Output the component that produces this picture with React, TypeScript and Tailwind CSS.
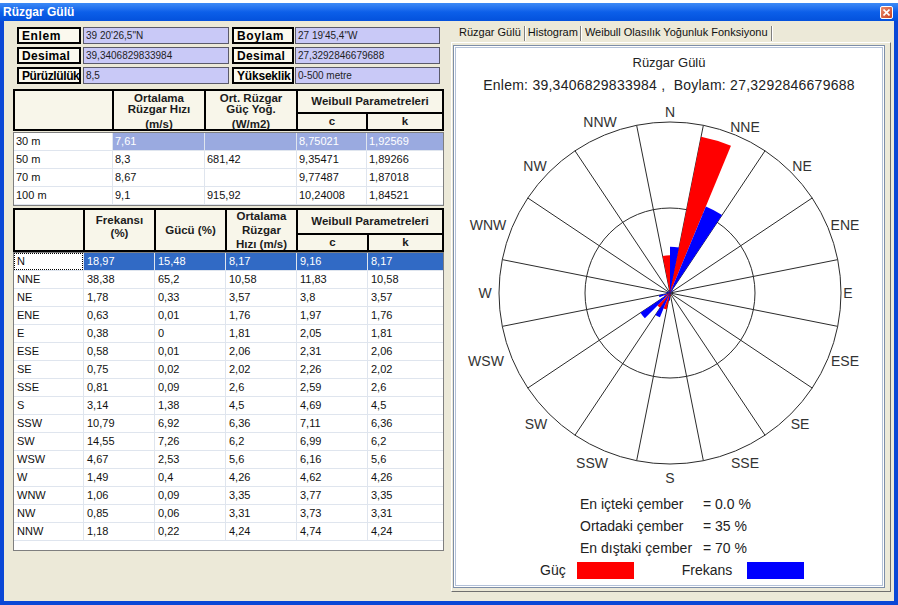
import React from "react"

const topRows = [
  ["30 m", "7,61", "", "8,75021", "1,92569"],
  ["50 m", "8,3", "681,42", "9,35471", "1,89266"],
  ["70 m", "8,67", "", "9,77487", "1,87018"],
  ["100 m", "9,1", "915,92", "10,24008", "1,84521"],
]

const dirRows = [
  ["N", "18,97", "15,48", "8,17", "9,16", "8,17"],
  ["NNE", "38,38", "65,2", "10,58", "11,83", "10,58"],
  ["NE", "1,78", "0,33", "3,57", "3,8", "3,57"],
  ["ENE", "0,63", "0,01", "1,76", "1,97", "1,76"],
  ["E", "0,38", "0", "1,81", "2,05", "1,81"],
  ["ESE", "0,58", "0,01", "2,06", "2,31", "2,06"],
  ["SE", "0,75", "0,02", "2,02", "2,26", "2,02"],
  ["SSE", "0,81", "0,09", "2,6", "2,59", "2,6"],
  ["S", "3,14", "1,38", "4,5", "4,69", "4,5"],
  ["SSW", "10,79", "6,92", "6,36", "7,11", "6,36"],
  ["SW", "14,55", "7,26", "6,2", "6,99", "6,2"],
  ["WSW", "4,67", "2,53", "5,6", "6,16", "5,6"],
  ["W", "1,49", "0,4", "4,26", "4,62", "4,26"],
  ["WNW", "1,06", "0,09", "3,35", "3,77", "3,35"],
  ["NW", "0,85", "0,06", "3,31", "3,73", "3,31"],
  ["NNW", "1,18", "0,22", "4,24", "4,74", "4,24"],
]

// label centres, page coordinates
const labelPos: [string, number, number][] = [
  ["N", 670, 113],
  ["NNE", 745, 128],
  ["NE", 802, 167],
  ["ENE", 845, 226],
  ["E", 848, 294],
  ["ESE", 845, 362],
  ["SE", 800, 425],
  ["SSE", 745, 464],
  ["S", 670, 479],
  ["SSW", 592, 464],
  ["SW", 536, 425],
  ["WSW", 486, 362],
  ["W", 485, 294],
  ["WNW", 488, 226],
  ["NW", 535, 167],
  ["NNW", 600, 123],
]

const OX = 456
const OY = 100
const CX = 670 - OX
const CY = 294 - OY
const R = 171

function pt(r: number, deg: number) {
  const a = (deg * Math.PI) / 180
  return [CX + r * Math.sin(a), CY - r * Math.cos(a)]
}

function wedge(r: number, a1: number, a2: number) {
  const [x1, y1] = pt(r, a1)
  const [x2, y2] = pt(r, a2)
  return `M${CX} ${CY}L${x1} ${y1}A${r} ${r} 0 0 1 ${x2} ${y2}Z`
}

const num = (s: string) => parseFloat(s.replace(",", "."))

function WindRose() {
  return (
    <svg width="426" height="390" className="block">
      {Array.from({ length: 16 }).map((_, k) => {
        const [x, y] = pt(R, 11.25 + 22.5 * k)
        return <line key={k} x1={CX} y1={CY} x2={x} y2={y} stroke="#2b2b2b" strokeWidth="1" />
      })}
      <circle cx={CX} cy={CY} r={R} fill="none" stroke="#2b2b2b" strokeWidth="1" />
      <circle cx={CX} cy={CY} r={85} fill="none" stroke="#2b2b2b" strokeWidth="1" />
      {dirRows.map((row, i) => {
        const th = 22.5 * i
        const fr = (num(row[1]) / 70) * R
        const pw = (num(row[2]) / 70) * R
        return (
          <g key={row[0]}>
            {pw > 0.3 && <path d={wedge(pw, th - 11.25, th)} fill="#ff0000" />}
            {fr > 0.3 && <path d={wedge(fr, th, th + 11.25)} fill="#0000ff" />}
          </g>
        )
      })}
      {labelPos.map(([t, x, y]) => (
        <text
          key={t}
          x={x - OX}
          y={y - OY}
          textAnchor="middle"
          dominantBaseline="central"
          fontSize="14"
          fill="#333333"
          fontFamily="Liberation Sans, Arial, sans-serif"
        >
          {t}
        </text>
      ))}
    </svg>
  )
}

function InfoLabel({ text, className }: { text: string; className: string }) {
  return (
    <div
      className={`h-full border-2 border-black bg-[#fbf9ee] flex items-center pl-[3px] overflow-hidden whitespace-nowrap text-[12px] font-bold text-black ${className}`}
    >
      {text}
    </div>
  )
}

function InfoValue({ text, className }: { text: string; className: string }) {
  return (
    <div
      className={`h-full border border-[#5a5a6a] bg-[#c9c9f7] flex items-center pl-[2px] text-[10px] text-[#1e1e1e] whitespace-nowrap ${className}`}
    >
      {text}
    </div>
  )
}

const hcell = "border border-black bg-[#f8f6ea] flex flex-col items-center justify-center text-[11.5px] font-bold text-[#1c1c1c] leading-[11px]"

function TopHeader() {
  return (
    <div className="grid grid-cols-[99px_92px_92px_70px_76px] grid-rows-[23px_17px] border border-black w-[431px] h-[42px]">
      <div className={`${hcell} row-span-2`} />
      <div className={`${hcell} row-span-2 justify-start pt-[2px]`}>
        <span>Ortalama</span>
        <span>Rüzgar Hızı</span>
        <span className="mt-[4px]">(m/s)</span>
      </div>
      <div className={`${hcell} row-span-2 justify-start pt-[2px]`}>
        <span>Ort. Rüzgar</span>
        <span>Güç Yoğ.</span>
        <span className="mt-[4px]">(W/m2)</span>
      </div>
      <div className={`${hcell} col-span-2`}>Weibull Parametreleri</div>
      <div className={hcell}>c</div>
      <div className={hcell}>k</div>
    </div>
  )
}

function BottomHeader() {
  return (
    <div className="grid grid-cols-[70px_71px_71px_71px_71px_75px] grid-rows-[25px_17px] border border-black w-[431px] h-[44px]">
      <div className={`${hcell} row-span-2`} />
      <div className={`${hcell} row-span-2 leading-[13px] pb-[6px]`}>
        <span>Frekansı</span>
        <span>(%)</span>
      </div>
      <div className={`${hcell} row-span-2`}>Gücü (%)</div>
      <div className={`${hcell} row-span-2 leading-[14px]`}>
        <span>Ortalama</span>
        <span>Rüzgar</span>
        <span>Hızı (m/s)</span>
      </div>
      <div className={`${hcell} col-span-2`}>Weibull Parametreleri</div>
      <div className={hcell}>c</div>
      <div className={hcell}>k</div>
    </div>
  )
}

const topWidths = ["w-[99px]", "w-[92px]", "w-[92px]", "w-[70px]", "w-[76px]"]
const dirWidths = ["w-[70px]", "w-[71px]", "w-[71px]", "w-[71px]", "w-[71px]", "w-[75px]"]

function LeftPanel() {
  return (
    <div className="w-[445px] shrink-0 pl-[9px] pt-[6px] text-[11px]">
      <div className="ml-[4px] flex flex-col gap-[3px]">
        <div className="flex h-[17px]">
          <InfoLabel text="Enlem" className="w-[64px] tracking-[0.6px]" />
          <InfoValue text={"39 20'26,5\"N"} className="ml-[2px] w-[146px]" />
          <InfoLabel text="Boylam" className="ml-[3px] w-[62px] tracking-[0.6px]" />
          <InfoValue text={"27 19'45,4\"W"} className="ml-[1px] w-[145px]" />
        </div>
        <div className="flex h-[17px]">
          <InfoLabel text="Desimal" className="w-[64px] tracking-[0.3px]" />
          <InfoValue text="39,3406829833984" className="ml-[2px] w-[146px]" />
          <InfoLabel text="Desimal" className="ml-[3px] w-[62px] tracking-[0.3px]" />
          <InfoValue text="27,3292846679688" className="ml-[1px] w-[145px]" />
        </div>
        <div className="flex h-[17px]">
          <InfoLabel text="Pürüzlülük" className="w-[64px] tracking-[-0.4px] pl-[1px]" />
          <InfoValue text="8,5" className="ml-[2px] w-[146px]" />
          <InfoLabel text="Yükseklik" className="ml-[3px] w-[62px] tracking-[-0.2px] pl-[1px]" />
          <InfoValue text="0-500 metre" className="ml-[1px] w-[145px] text-[9.5px]" />
        </div>
      </div>

      <div className="mt-[5px]">
        <TopHeader />
      </div>

      <div className="mt-[1px] w-[431px] h-[74px] border border-[#7f7f7f] bg-white">
        {topRows.map((row, i) => (
          <div key={i} className="flex h-[18px] border-b border-[#dfe5ee]">
            {row.map((c, j) => (
              <div
                key={j}
                className={`${topWidths[j]} h-full flex items-center pl-[2px] border-r border-[#dfe5ee] last:border-r-0 ${
                  i === 0 && j > 0 ? "bg-[#9aaae0] text-white" : "text-[#111]"
                }`}
              >
                {c}
              </div>
            ))}
          </div>
        ))}
      </div>

      <div className="mt-[2px]">
        <BottomHeader />
      </div>

      <div className="w-[431px] h-[299px] border border-[#7f7f7f] bg-white">
        {dirRows.map((row, i) => (
          <div key={i} className="flex h-[18px] border-b border-[#dfe5ee]">
            {row.map((c, j) => (
              <div
                key={j}
                className={`${dirWidths[j]} h-full flex items-center border-r border-[#dfe5ee] last:border-r-0 ${
                  i === 0 && j > 0 ? "bg-[#316ac5] text-white" : "text-[#111]"
                }`}
              >
                {i === 0 && j === 0 ? (
                  <div className="h-full w-full border border-dotted border-black flex items-center pl-[2px]">{c}</div>
                ) : (
                  <span className="pl-[3px]">{c}</span>
                )}
              </div>
            ))}
          </div>
        ))}
      </div>
    </div>
  )
}

function RightPanel() {
  return (
    <div className="flex-1 pt-[3px]">
      <div className="h-[18px] flex items-start pl-[7px] text-[11px] text-[#111]">
        <div className="flex items-center h-[17px] px-[3px]">Rüzgar Gülü</div>
        <div className="w-[1px] h-[15px] mt-[2px] bg-[#7f7f7f]" />
        <div className="w-[1px] h-[15px] mt-[2px] bg-white" />
        <div className="flex items-center h-[17px] px-[2px]">Histogram</div>
        <div className="w-[1px] h-[15px] mt-[2px] bg-[#7f7f7f]" />
        <div className="w-[1px] h-[15px] mt-[2px] bg-white" />
        <div className="flex items-center h-[17px] px-[3px]">Weibull Olasılık Yoğunluk Fonksiyonu</div>
        <div className="w-[1px] h-[15px] mt-[2px] bg-[#7f7f7f]" />
        <div className="w-[1px] h-[15px] mt-[2px] bg-white" />
      </div>
      <div className="ml-[2px] w-[440px] h-[550px] border border-white border-r-[#6f6f6f] border-b-[#6f6f6f]">
        <div className="mt-[2px] ml-[1px] w-[432px] h-[543px] border border-[#7d8ea8] p-[1px] bg-white">
          <div className="h-full border border-[#b3c1d8] bg-white flex flex-col text-[#222]">
            <div className="mt-[7px] h-[16px] flex items-center justify-center text-[13px]">Rüzgar Gülü</div>
            <div className="mt-[5px] h-[18px] flex items-center justify-center text-[14px] tracking-[0.25px] whitespace-pre">
              {"Enlem: 39,3406829833984 ,  Boylam: 27,3292846679688"}
            </div>
            <div className="mt-[5px] h-[390px]">
              <WindRose />
            </div>
            <div className="mt-[4px] pl-[124px] grid grid-cols-[123px_auto] text-[14px] leading-[22px] text-[#222]">
              <span>En içteki çember</span>
              <span>= 0.0 %</span>
              <span>Ortadaki çember</span>
              <span>= 35 %</span>
              <span>En dıştaki çember</span>
              <span>= 70 %</span>
            </div>
            <div className="h-[22px] flex items-center pl-[84px] text-[14px] text-[#222]">
              <span>Güç</span>
              <div className="ml-[11px] w-[57px] h-[17px] bg-[#ff0000]" />
              <span className="ml-[48px]">Frekans</span>
              <div className="ml-[15px] w-[57px] h-[17px] bg-[#0000ff]" />
            </div>
          </div>
        </div>
      </div>
    </div>
  )
}

export default function App() {
  return (
    <div className="w-[898px] h-[605px] overflow-hidden bg-white pt-[3px] font-['Liberation_Sans',Arial,sans-serif]">
      <div className="h-[602px] flex flex-col bg-[#0a47d6]">
        <div className="h-[18px] shrink-0 flex items-center justify-between pl-[3px] pr-[5px] bg-gradient-to-b from-[#3d8af6] via-[#0c5fe9] to-[#0451dc]">
          <span className="text-white font-bold text-[12px] leading-none">Rüzgar Gülü</span>
          <div className="w-[13px] h-[13px] rounded-[2px] border border-white bg-gradient-to-br from-[#e88a6c] to-[#c9401e] flex items-center justify-center">
            <svg width="7" height="7" viewBox="0 0 7 7">
              <path d="M0.5 0.5L6.5 6.5M6.5 0.5L0.5 6.5" stroke="white" strokeWidth="1.6" />
            </svg>
          </div>
        </div>
        <div className="flex-1 mx-[4px] mb-[4px] bg-[#ece9d8] flex">
          <LeftPanel />
          <RightPanel />
        </div>
      </div>
    </div>
  )
}
